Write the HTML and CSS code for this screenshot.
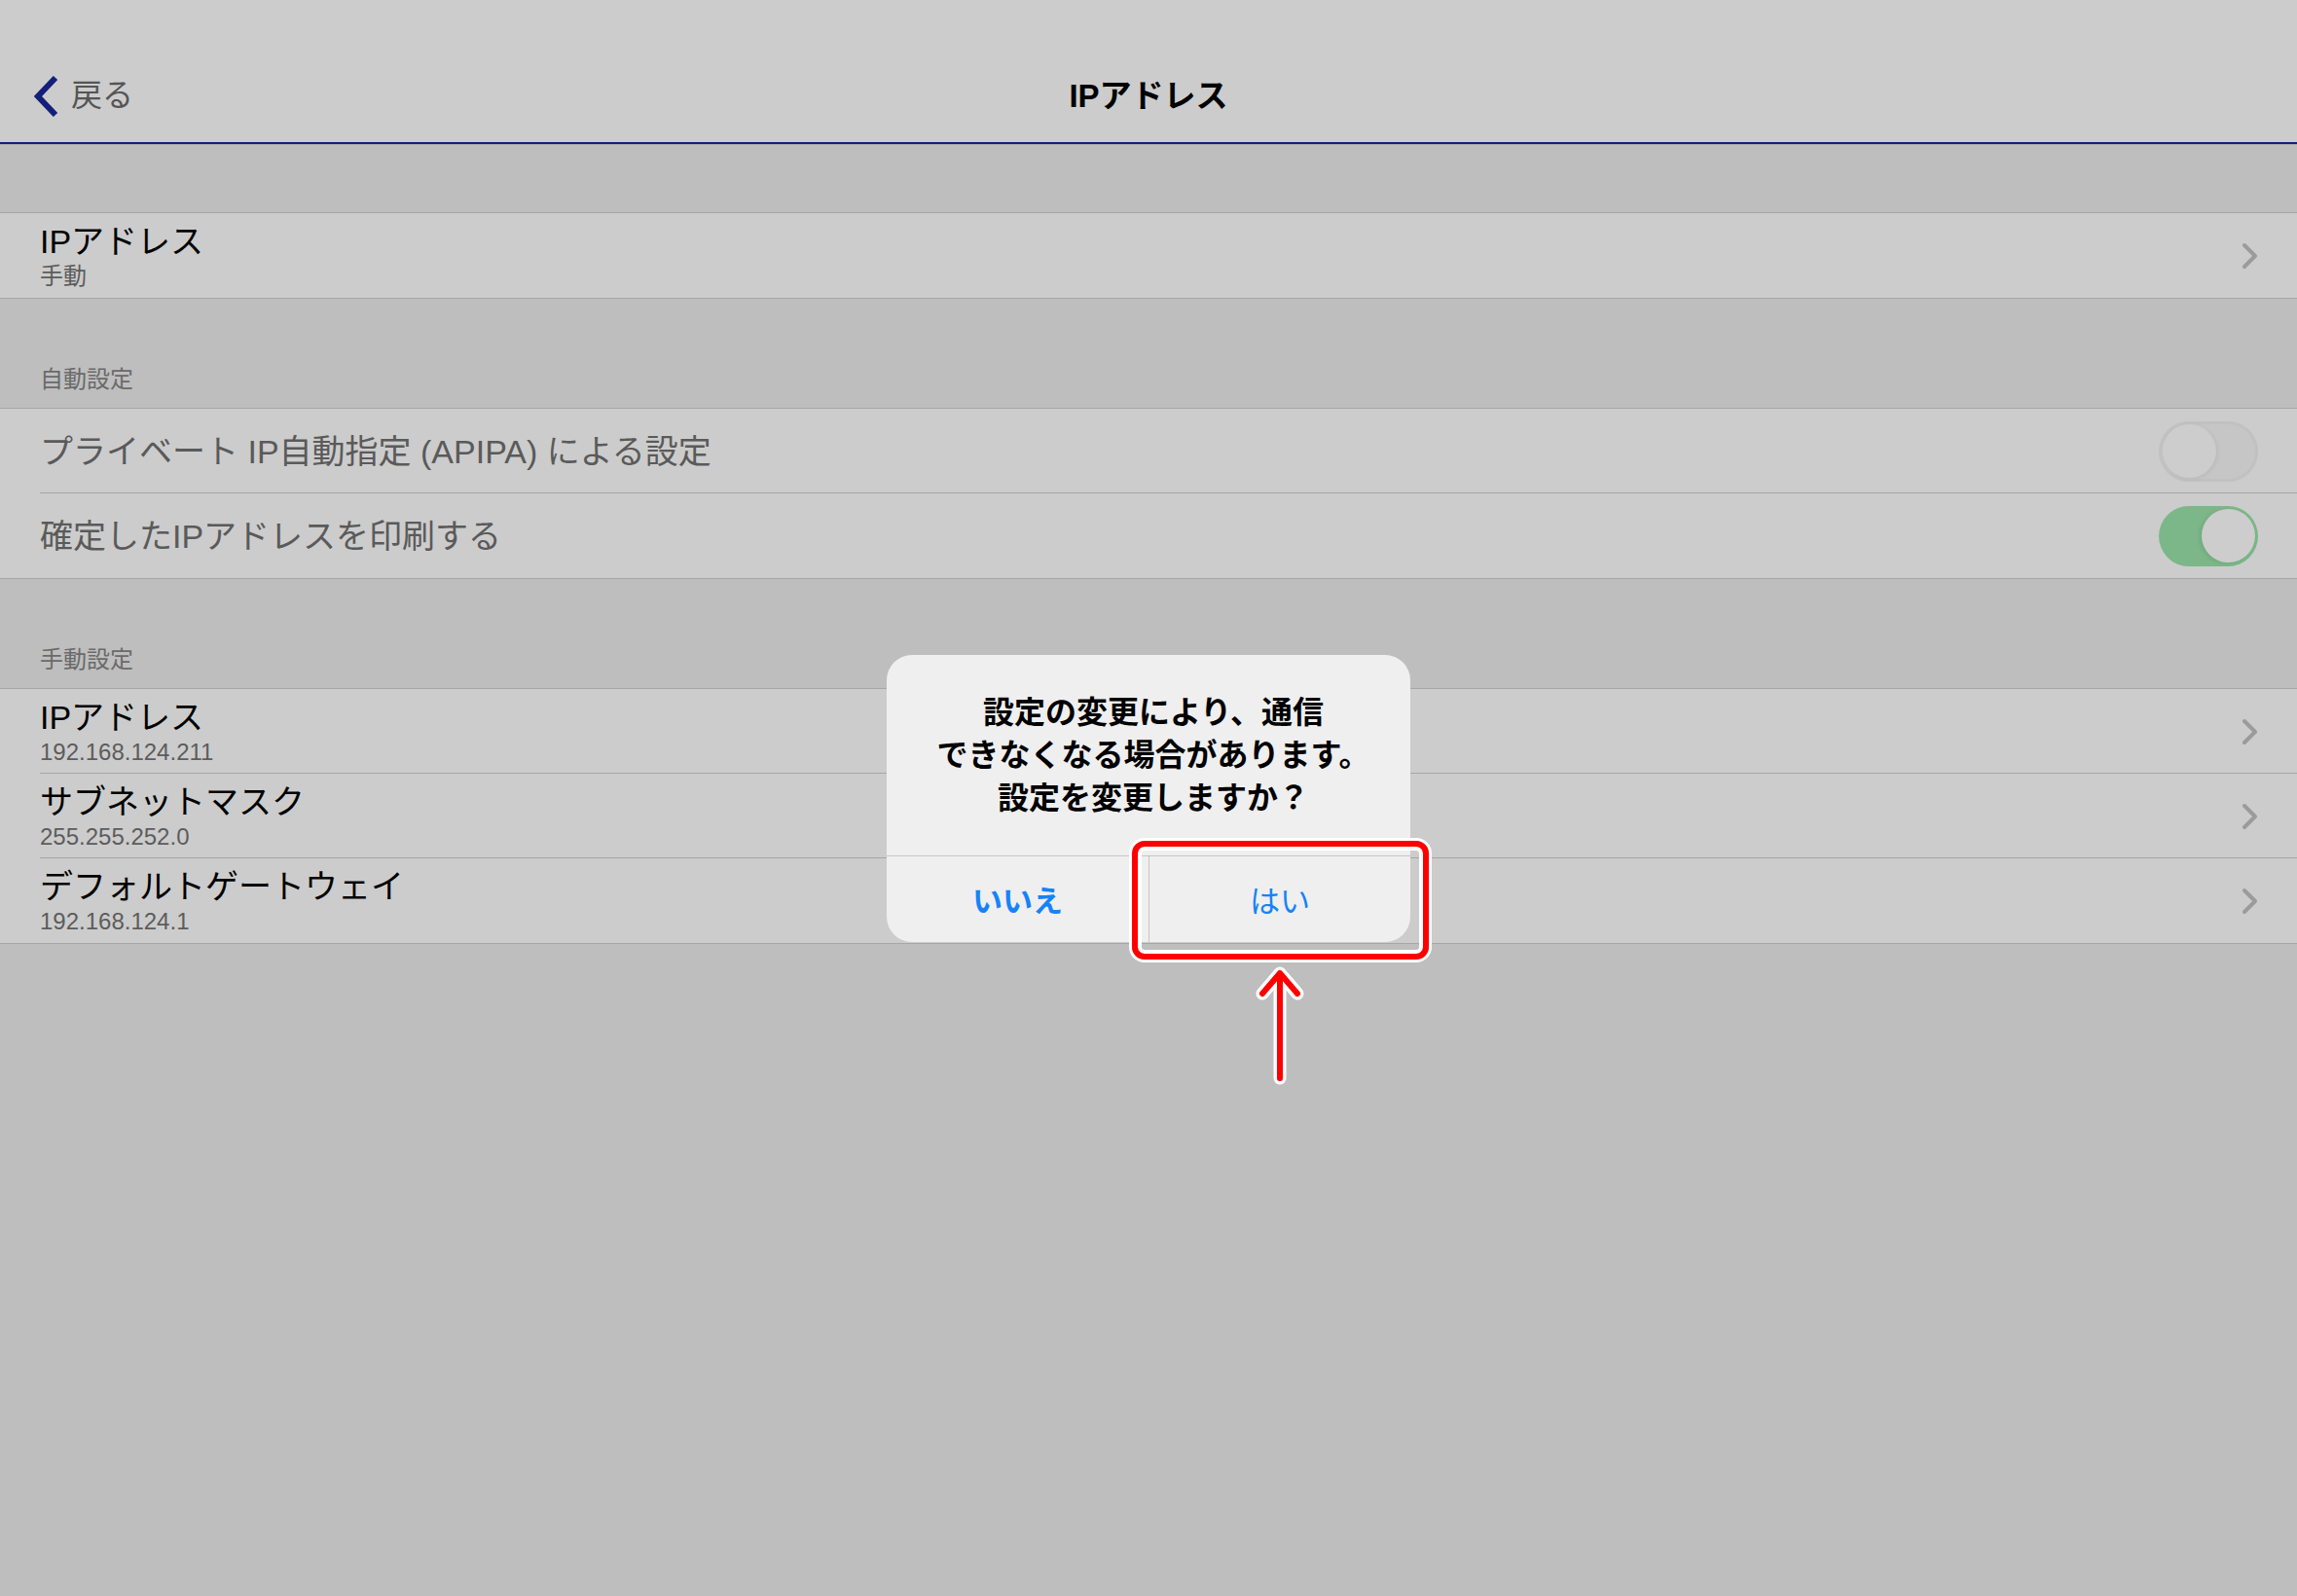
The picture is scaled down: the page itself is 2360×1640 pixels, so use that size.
FILE: index.html
```html
<!DOCTYPE html>
<html lang="ja">
<head>
    <meta charset="UTF-8">
    <meta name="viewport" content="width=device-width, initial-scale=1.0">
    <title>IPアドレス</title>
    <link rel="stylesheet" href="styles.css">
</head>
<body>
    <header class="navbar">
        <a class="back" href="#">
            <svg class="back-icon" width="26" height="42" viewBox="0 0 26 42">
                <polyline points="22,2 4,21 22,40" />
            </svg>
            <span>戻る</span>
        </a>
        <h1 class="nav-title">IPアドレス</h1>
        <span></span>
    </header>

    <main class="settings">
        <div class="top-gap"></div>
        <ul class="group">
            <li class="cell">
                <div class="cell-text">
                    <span class="cell-title">IPアドレス</span>
                    <span class="cell-detail">手動</span>
                </div>
                <svg class="chevron" width="18" height="28" viewBox="0 0 18 28"><polyline points="3,3 14,14 3,25" /></svg>
            </li>
        </ul>

        <div class="section-header">自動設定</div>
        <ul class="group">
            <li class="cell cell-single">
                <span class="cell-title disabled">プライベート IP自動指定 (APIPA) による設定</span>
                <span class="switch"><span class="knob"></span></span>
            </li>
            <li class="cell cell-single">
                <span class="cell-title disabled">確定したIPアドレスを印刷する</span>
                <span class="switch on"><span class="knob"></span></span>
            </li>
        </ul>

        <div class="section-header">手動設定</div>
        <ul class="group">
            <li class="cell">
                <div class="cell-text">
                    <span class="cell-title">IPアドレス</span>
                    <span class="cell-detail">192.168.124.211</span>
                </div>
                <svg class="chevron" width="18" height="28" viewBox="0 0 18 28"><polyline points="3,3 14,14 3,25" /></svg>
            </li>
            <li class="cell">
                <div class="cell-text">
                    <span class="cell-title">サブネットマスク</span>
                    <span class="cell-detail">255.255.252.0</span>
                </div>
                <svg class="chevron" width="18" height="28" viewBox="0 0 18 28"><polyline points="3,3 14,14 3,25" /></svg>
            </li>
            <li class="cell">
                <div class="cell-text">
                    <span class="cell-title">デフォルトゲートウェイ</span>
                    <span class="cell-detail">192.168.124.1</span>
                </div>
                <svg class="chevron" width="18" height="28" viewBox="0 0 18 28"><polyline points="3,3 14,14 3,25" /></svg>
            </li>
        </ul>
    </main>

    <div class="overlay">
        <div class="alert">
            <p class="alert-message">設定の変更により、通信<br>できなくなる場合があります。<br>設定を変更しますか？</p>
            <div class="alert-buttons">
                <button class="alert-btn cancel">いいえ</button>
                <button class="alert-btn">はい</button>
            </div>
            <!-- annotation: highlight on the "はい" button -->
            <div class="highlight"></div>
            <svg class="pointer" width="50" height="126" viewBox="0 0 50 126">
                <g class="pointer-outline">
                    <polyline points="7,30 25,9 43,30" />
                    <line x1="25" y1="10" x2="25" y2="117" />
                </g>
                <g class="pointer-arrow">
                    <polyline points="7,30 25,9 43,30" />
                    <line x1="25" y1="10" x2="25" y2="117" />
                </g>
            </svg>
        </div>
    </div>
</body>
</html>
```

FILE: styles.css
```css
* {
    box-sizing: border-box;
}
body {
    margin: 0;
    min-height: 1640px;
    background-color: #bebebe;
    font-family: "Liberation Sans", "Noto Sans CJK JP", sans-serif;
    color: #000;
}
ul {
    list-style: none;
    margin: 0;
    padding: 0;
}

/* Navigation bar */
.navbar {
    height: 148px;
    padding-top: 52px;
    display: grid;
    grid-template-columns: 1fr auto 1fr;
    align-items: center;
    background-color: #cccccc;
    border-bottom: 2px solid #13207a;
    box-shadow: 0 1px 0 #a9a9a9;
}
.back {
    display: flex;
    align-items: center;
    gap: 12px;
    padding-left: 35px;
    color: #555;
    font-size: 32px;
    line-height: 40px;
    text-decoration: none;
}
.back span {
    margin-top: -3px;
}
.back-icon polyline {
    fill: none;
    stroke: #13207a;
    stroke-width: 6;
}
.nav-title {
    margin: 0;
    font-size: 33px;
    font-weight: 700;
    line-height: 40px;
}

/* Table view */
.top-gap {
    height: 70px;
}
.group {
    background-color: #cccccc;
    border-top: 1px solid #a6a6a6;
    border-bottom: 1px solid #a6a6a6;
}
.cell {
    height: 87px;
    padding: 0 40px 0 41px;
    display: flex;
    align-items: center;
    justify-content: space-between;
    position: relative;
}
.cell + .cell::before {
    content: "";
    position: absolute;
    top: -1px;
    left: 41px;
    right: 0;
    border-top: 1px solid #a6a6a6;
}
.cell-text {
    display: flex;
    flex-direction: column;
    padding-top: 2px;
}
.cell-title {
    font-size: 34px;
    line-height: 40px;
}
.cell-title.disabled {
    color: #5a5a5a;
}
.cell-detail {
    font-size: 24px;
    line-height: 32px;
    color: #5c5c5c;
}
.chevron {
    margin-right: -1px;
}
.chevron polyline {
    fill: none;
    stroke: #9b9b9b;
    stroke-width: 4;
    stroke-linecap: round;
    stroke-linejoin: round;
}
.section-header {
    height: 112px;
    padding: 0 41px 14px;
    display: flex;
    align-items: flex-end;
    font-size: 24px;
    line-height: 30px;
    color: #6a6a6a;
}

/* Switches */
.switch {
    width: 102px;
    height: 62px;
    border-radius: 31px;
    background-color: #c6c6c6;
    box-shadow: inset 0 0 0 3px #c1c1c1;
    display: flex;
    align-items: center;
    padding: 0 4px;
}
.switch .knob {
    width: 55px;
    height: 55px;
    border-radius: 50%;
    background-color: #cdcdcd;
    box-shadow: 2px 1px 4px rgba(0, 0, 0, 0.06);
}
.switch.on {
    background-color: #7bb788;
    box-shadow: none;
    justify-content: flex-end;
    padding: 0 3px;
}
.switch.on .knob {
    box-shadow: -2px 1px 4px rgba(0, 0, 0, 0.08);
}

/* Alert */
.overlay {
    position: fixed;
    inset: 0;
    display: flex;
    align-items: center;
    justify-content: center;
}
.alert {
    width: 538px;
    position: relative;
    background-color: #efefef;
    border-radius: 26px;
    font-family: "Noto Sans CJK JP", sans-serif;
}
.alert-message {
    margin: 0;
    padding: 34px 16px 40px 26px;
    text-align: center;
    font-size: 32px;
    font-weight: 700;
    line-height: 44px;
    border-bottom: 1px solid #c6c6c6;
}
.alert-buttons {
    display: grid;
    grid-template-columns: 1fr 1fr;
    height: 88px;
}
.alert-btn {
    border: none;
    background: none;
    padding: 0;
    font-family: "Noto Sans CJK JP", sans-serif;
    font-size: 31px;
    color: #1583f8;
}
.alert-btn.cancel {
    font-weight: 700;
}
.alert-btn + .alert-btn {
    border-left: 1px solid #c6c6c6;
}
.highlight {
    position: absolute;
    left: 252px;
    top: 191px;
    width: 305px;
    height: 122px;
    border: 6px solid #ff0000;
    border-radius: 13px;
    box-shadow: 0 0 0 3px #fff, inset 0 0 0 4px #fff;
}
.pointer {
    position: absolute;
    left: 379px;
    top: 318px;
}
.pointer polyline,
.pointer line {
    fill: none;
    stroke-linecap: round;
    stroke-linejoin: round;
}
.pointer-outline polyline,
.pointer-outline line {
    stroke: #fff;
    stroke-width: 13;
}
.pointer-arrow polyline,
.pointer-arrow line {
    stroke: #ff0000;
    stroke-width: 6;
}
```
